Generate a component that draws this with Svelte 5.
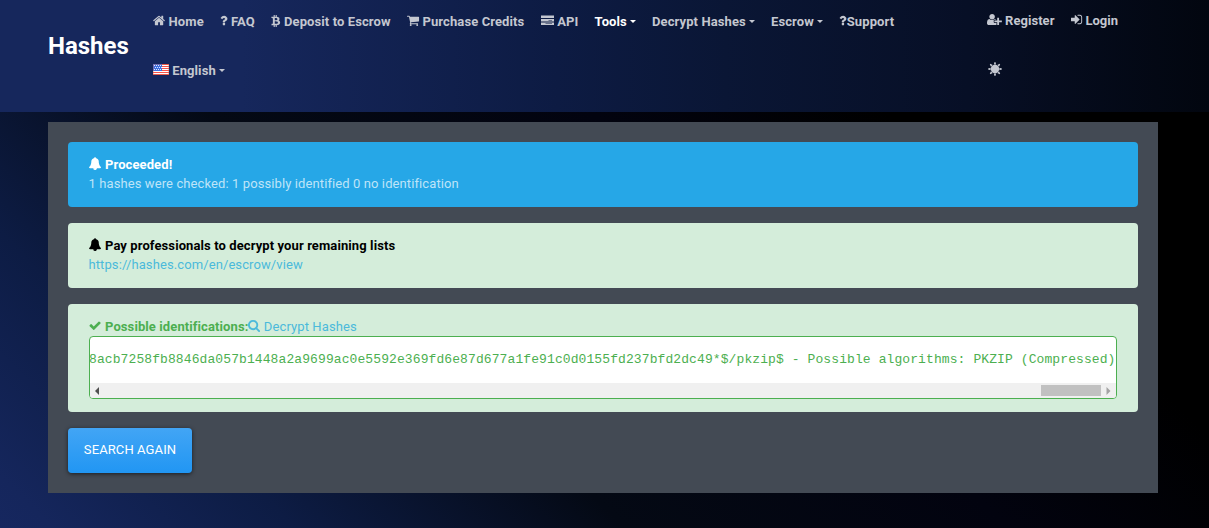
<script lang="ts">
  type Icon = { x?: number; w: number; d: string };
  const icons: Record<string, Icon> = {
    home: { w: 1664, d: 'M1408 992v480q0 26-19 45t-45 19h-384v-384h-256v384h-384q-26 0-45-19t-19-45v-480q0-1 .5-3t.5-3l575-474 575 474q1 2 1 6zm223-69l-62 74q-8 9-21 11h-3q-13 0-21-7l-692-577-692 577q-12 8-24 7-13-2-21-11l-62-74q-8-10-7-23.500t11-21.500l719-599q32-26 76-26t76 26l244 204v-195q0-14 9-23t23-9h192q14 0 23 9t9 23v408l219 182q10 8 11 21.500t-7 23.500z' },
    question: { w: 1024, d: 'M704 1256v240q0 16-12 28t-28 12h-240q-16 0-28-12t-12-28v-240q0-16 12-28t28-12h240q16 0 28 12t12 28zm316-600q0 54-15.500 101t-35 76.500-55 59.500-57.500 43.500-61 35.500q-41 23-68.500 65t-27.500 67q0 17-12 32.500t-28 15.500h-240q-15 0-25.500-18.500t-10.500-37.500v-45q0-83 65-156.500t143-108.500q59-27 84-56t25-76q0-42-46.500-74t-107.500-32q-65 0-108 29-35 25-107 115-13 16-31 16-12 0-25-8l-164-125q-13-10-15.500-25t5.500-28q160-266 464-266 80 0 161 31t146 83 106 127.500 41 158.500z' },
    btc: { w: 1280, d: 'M1167 640q18 182-131 258 117 28 175 103t45 214q-7 71-32.500 125t-64.500 89-97 58.500-121.500 34.500-145.500 15v255h-154v-251q-80 0-122-1v252h-154v-255q-18 0-54-.5t-55-.5h-200l31-183h111q50 0 58-51v-402h16q-6-1-16-1v-287q-13-68-89-68h-111v-164l212 1q64 0 97-1v-252h154v247q82-2 122-2v-245h154v252q79 7 140 22.500t113 45 82.500 78 36.500 114.500zm-215 545q0-36-15-64t-37-46-57.500-30.500-65.500-18.500-74-9-69-3-64.500 1-47.500 1v338q8 0 37 .5t48 .5 53-1.500 58.500-4 57-8.500 55.500-14 47.500-21 39.500-30 24.500-40 9.500-51zm-71-476q0-33-12.500-58.500t-30.500-42-48-28-55-16.500-61.500-8-58-2.500-54 1-39.500.5v307q5 0 34.500.5t46.500 0 50-2 55-5.500 51.500-11 48.500-18.500 37-27 27-38.500 9-51z' },
    cart: { w: 1664, d: 'M640 1536q0 52-38 90t-90 38-90-38-38-90 38-90 90-38 90 38 38 90zm896 0q0 52-38 90t-90 38-90-38-38-90 38-90 90-38 90 38 38 90zm128-1088v512q0 24-16.500 42.500t-40.500 21.500l-1044 122q13 60 13 70 0 16-24 64h920q26 0 45 19t19 45-19 45-45 19h-1024q-26 0-45-19t-19-45q0-11 8-31.500t16-36 21.500-40 15.500-29.500l-177-823h-204q-26 0-45-19t-19-45 19-45 45-19h256q16 0 28.500 6.500t19.500 15.500 13 24.500 8 26 5.500 29.500 4.500 26h1201q26 0 45 19t19 45z' },
    server: { w: 1792, d: 'M0 207h1792v345h-1792zM0 690h1792v345h-1792zm1034 138v69h483v-69zM0 1172h1792v346h-1792zm620 138v69h897v-69z' },
    userplus: { w: 2048, d: 'M704 896q-159 0-271.500-112.500t-112.500-271.500 112.500-271.500 271.500-112.500 271.500 112.500 112.500 271.500-112.500 271.500-271.500 112.500zm960 128h352q13 0 22.500 9.500t9.500 22.500v192q0 13-9.500 22.500t-22.500 9.500h-352v352q0 13-9.500 22.500t-22.500 9.500h-192q-13 0-22.500-9.500t-9.500-22.500v-352h-352q-13 0-22.500-9.500t-9.500-22.500v-192q0-13 9.500-22.500t22.500-9.500h352v-352q0-13 9.500-22.500t22.500-9.500h192q13 0 22.500 9.500t9.500 22.500v352zm-736 224q0 52 38 90t90 38h256v238q-68 50-171 50h-874q-121 0-194-69t-73-190q0-53 3.500-103.500t14-109 26.500-108.500 43-97.500 62-81 85.500-53.500 111.500-20q19 0 39 17 79 61 154.500 91.500t164.500 30.500 164.500-30.500 154.500-91.500q20-17 39-17 132 0 217 96h-223q-52 0-90 38t-38 90v192z' },
    signin: { w: 1536, d: 'M1184 896q0 26-19 45l-544 544q-19 19-45 19t-45-19-19-45v-288h-448q-26 0-45-19t-19-45v-384q0-26 19-45t45-19h448v-288q0-26 19-45t45-19 45 19l544 544q19 19 19 45zm352-352v704q0 119-84.500 203.500t-203.500 84.500h-320q-13 0-22.500-9.500t-9.500-22.500q0-4-1-20t-.5-26.500 3-23.500 10-19.500 20.500-6.500h320q66 0 113-47t47-113v-704q0-66-47-113t-113-47h-312l-11.500-1-11.500-3-8-5.500-7-9-2-13.500q0-4-1-20t-.5-26.500 3-23.500 10-19.500 20.500-6.500h320q119 0 203.500 84.500t84.500 203.500z' },
    bell: { x: 64, w: 1760, d: 'M912 1696q0-16-16-16-59 0-101.500-42.500t-42.500-101.500q0-16-16-16t-16 16q0 73 51.500 124.500t124.500 51.500q16 0 16-16zm816-288q0 52-38 90t-90 38h-448q0 106-75 181t-181 75-181-75-75-181h-448q-52 0-90-38t-38-90q50-42 91-88t85-119.500 74.500-158.500 50-206 19.500-260q0-152 117-282.500t307-158.500q-8-19-8-39 0-40 28-68t68-28 68 28 28 68q0 20-8 39 190 28 307 158.500t117 282.500q0 139 19.500 260t50 206 74.500 158.500 85 119.500 91 88z' },
    check: { x: 60, w: 1760, d: 'M1671 566q0 40-28 68l-724 724-136 136q-28 28-68 28t-68-28l-136-136-362-362q-28-28-28-68t28-68l136-136q28-28 68-28t68 28l294 295 656-657q28-28 68-28t68 28l136 136q28 28 28 68z' },
    search: { w: 1664, d: 'M1152 832q0-185-131.500-316.500t-316.500-131.500-316.500 131.500-131.500 316.500 131.500 316.500 316.500 131.500 316.500-131.500 131.500-316.500zm512 832q0 52-38 90t-90 38q-54 0-90-38l-343-342q-179 124-399 124-143 0-273.500-55.500t-225-150-150-225-55.500-273.500 55.500-273.500 150-225 225-150 273.500-55.500 273.500 55.500 225 150 150 225 55.500 273.500q0 220-124 399l343 343q37 37 37 90z' }
  };
  const nav = [
    { label: 'Home', icon: 'home', gap: true },
    { label: 'FAQ', icon: 'question', gap: true },
    { label: 'Deposit to Escrow', icon: 'btc', gap: true },
    { label: 'Purchase Credits', icon: 'cart', gap: true },
    { label: 'API', icon: 'server', gap: true },
    { label: 'Tools', caret: true, active: true },
    { label: 'Decrypt Hashes', caret: true },
    { label: 'Escrow', caret: true },
    { label: 'Support', icon: 'question', gap: false }
  ];
  const rays = [0, 45, 90, 135, 180, 225, 270, 315];
</script>

{#snippet fa(name: string)}
  <svg class="fa" viewBox="{icons[name].x ?? 0} 0 {icons[name].w} 1792" style="width:{(icons[name].w / 1792) * 13}px" aria-hidden="true"><path d={icons[name].d} /></svg>
{/snippet}

<div class="page">
  <header>
    <a class="brand" href="#home">Hashes</a>
    <nav class="main">
      {#each nav as item}
        <a href="#nav" class:active={item.active}>{#if item.icon}{@render fa(item.icon)}{/if}{#if item.gap}&nbsp;{/if}{item.label}{#if item.caret}<i class="caret"></i>{/if}</a>
      {/each}
      <a href="#lang"><svg class="flag" viewBox="0 0 16 11" aria-hidden="true">
          <rect width="16" height="11" fill="#fff" />
          <path d="M0 .5h16M0 2.500h16M0 4.500h16M0 6.500h16M0 8.500h16M0 10.500h16" stroke="#f8524a" />
          <rect width="9" height="7" fill="#3f6fe0" />
          <path d="M1 1.500h7M2 3.500h7M1 5.500h7" stroke="#dfe8ff" stroke-dasharray="1 1" />
          <rect x=".5" y=".5" width="15" height="10" fill="none" stroke="#d06a50" stroke-opacity=".35" />
        </svg>&nbsp;English<i class="caret"></i></a>
    </nav>
    <nav class="account">
      <a href="#register">{@render fa('userplus')}&nbsp;Register</a>
      <a href="#login">{@render fa('signin')}&nbsp;Login</a>
      <a href="#theme" class="theme" aria-label="Theme"><svg viewBox="-7 -7 14 14" width="14" height="14">
          <circle r="4.200" />
          {#each rays as r}<path d="M-1.200 -4.400L-.4 -6.900H.4L1.200 -4.400z" transform="rotate({r})" />{/each}
        </svg></a>
    </nav>
  </header>

  <main>
    <section class="alert info">
      <div><b>{@render fa('bell')}&nbsp;Proceeded!</b></div>
      <div class="soft">1 hashes were checked: 1 possibly identified 0 no identification</div>
    </section>
    <section class="alert pay">
      <div><b>{@render fa('bell')}&nbsp;Pay professionals to decrypt your remaining lists</b></div>
      <div><a href="#escrow">https://hashes.com/en/escrow/view</a></div>
    </section>
    <section class="alert result">
      <div><b>{@render fa('check')}&nbsp;Possible identifications:</b><a href="#decrypt">{@render fa('search')}&nbsp;Decrypt Hashes</a></div>
      <div class="box">
        <pre>8acb7258fb8846da057b1448a2a9699ac0e5592e369fd6e87d677a1fe91c0d0155fd237bfd2dc49*$/pkzip$ - Possible algorithms: PKZIP (Compressed)</pre>
        <div class="bar">
          <svg width="5" height="8" viewBox="0 0 5 8"><path d="M4 0v8L0 4z" fill="#505050" /></svg>
          <span class="thumb"></span>
          <svg width="5" height="8" viewBox="0 0 5 8"><path d="M.5 0v8l4-4z" fill="#a3a3a3" /></svg>
        </div>
      </div>
    </section>
    <button type="button">SEARCH AGAIN</button>
  </main>
</div>

<style>
  :global(body) { margin: 0; overflow: hidden; }
  .page {
    box-sizing: border-box;
    height: 528px;
    font: 13px/19.500px Roboto, sans-serif;
    letter-spacing: .1px;
    background: linear-gradient(45deg, #16275f 0%, #15265c 3%, #0d1c44 17%, #040914 36%, #02030f 58%, #000 75%);
  }
  a { text-decoration: none; }
  header {
    box-sizing: border-box;
    height: 112px;
    padding: 0 48px;
    display: flex;
    align-items: flex-start;
    background: linear-gradient(90deg, #16275c 0%, #16275c 20%, #0d1b43 46%, #0a1635 60%, #070f26 80%, #02060f 100%);
  }
  .brand { width: 96.800px; padding-top: 30px; font-size: 24px; line-height: 32px; font-weight: 700; letter-spacing: 0; color: #fff; }
  nav { display: flex; flex-wrap: wrap; font-weight: 700; }
  nav a { height: 49px; padding: 12px 8.100px 0; box-sizing: border-box; color: #c4c7d0; white-space: nowrap; }
  nav .fa { margin-right: .3px; }
  nav .active { color: #fff; }
  .main { width: 833.700px; }
  .account { width: 150px; margin-top: -1px; }
  .account a { letter-spacing: .05px; }
  .theme { padding-left: 10px; padding-top: 14px; }
  .fa { height: 13px; fill: currentColor; vertical-align: -1px; overflow: visible; }
  .flag { width: 16px; height: 11px; vertical-align: 0; }
  .caret { display: inline-block; margin-left: 3px; vertical-align: 3px; border: 3.300px solid transparent; border-top: 3px solid currentColor; border-bottom: 0; }
  .theme svg { fill: currentColor; display: block; }
  main {
    box-sizing: border-box;
    width: 1110px;
    height: 371px;
    margin: 10px 0 0 48px;
    padding: 20px;
    background: #434a54;
  }
  .alert { box-sizing: border-box; height: 65px; padding: 13px 20.500px; margin-bottom: 16px; border-radius: 4px; line-height: 19px; }
  .alert b { font-weight: 700; }
  .alert b .fa { margin-right: .4px; }
  .info { background: #26a7e7; color: #fff; }
  .soft { color: #bee4f8; }
  .pay, .result { background: #d4edda; }
  .pay { color: #000; }
  .alert a { color: #4bbada; }
  .result { height: 108px; color: #4caf50; }
  .box { box-sizing: border-box; height: 63px; margin: 0 .5px; border: 1px solid #4caf50; border-radius: 4px; background: #fff; overflow: hidden; }
  pre { margin: 0 0 0 -1px; height: 46px; padding-top: 13px; box-sizing: border-box; font: 13px/19.500px "Liberation Mono", monospace; letter-spacing: .095px; }
  .bar { height: 15px; display: flex; align-items: center; padding: 0 5px; background: #f0f0f0; }
  .thumb { width: 60px; height: 11px; margin: 0 5px 0 auto; background: #c1c1c1; }
  button {
    width: 124px;
    height: 45px;
    padding: 0 0 2px;
    border: 0;
    border-radius: 4px;
    font: 13px Roboto, sans-serif;
    letter-spacing: .1px;
    color: #fff;
    background: linear-gradient(#42a5f5, #2196f3);
    box-shadow: 0 1px 4px rgba(0, 0, 0, .6);
  }
</style>
